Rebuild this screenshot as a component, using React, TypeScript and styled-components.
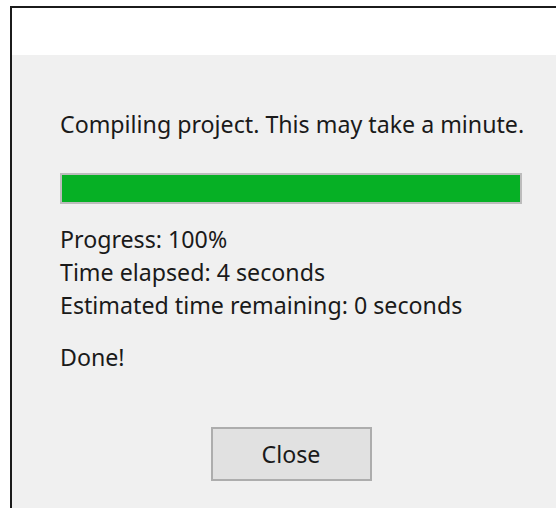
import React from 'react'
import styled, { createGlobalStyle } from 'styled-components'

const GlobalStyle = createGlobalStyle`
  html, body {
    margin: 0;
    padding: 0;
    background: #ffffff;
  }
  body {
    font-family: 'Noto Sans', 'Open Sans', sans-serif;
    overflow: hidden;
  }
`

const Window = styled.div`
  margin: 6px 0 0 10px;
  height: 502px;
  border-top: 2px solid #1b1b1b;
  border-left: 2px solid #1b1b1b;
  display: flex;
  flex-direction: column;
`

const TitleBar = styled.div`
  height: 47px;
  background: #ffffff;
`

const Body = styled.div`
  flex: 1;
  background: #f0f0f0;
  padding: 53px 0 0 48px;
  color: #1a1a1a;
  font-size: 23.2px;
`

const Message = styled.div`
  line-height: 33px;
  width: 480px;
  white-space: nowrap;
`

const Bar = styled.div`
  width: 462px;
  height: 31px;
  margin-top: 32px;
  box-sizing: border-box;
  border: 2px solid #bcbcbc;
  background: #e6e6e6;
`

type FillProps = { $pct: number }
const Fill = styled.div<FillProps>`
  height: 100%;
  width: ${({ $pct }) => $pct}%;
  background: #06b025;
`

const Stats = styled.div`
  margin-top: 19px;
  line-height: 33px;
`

const Status = styled.div`
  margin-top: 19px;
  line-height: 33px;
`

const Footer = styled.div`
  margin-top: 53px;
  width: 462px;
  display: flex;
  justify-content: center;
`

const Button = styled.button`
  width: 161px;
  height: 54px;
  box-sizing: border-box;
  border: 2px solid #adadad;
  background: #e1e1e1;
  font-family: inherit;
  font-size: 23.2px;
  color: #1a1a1a;
  padding: 0;
`

export default function App() {
  const progress = 100
  return (
    <>
      <GlobalStyle />
      <Window>
        <TitleBar />
        <Body>
          <Message>Compiling project. This may take a minute.</Message>
          <Bar>
            <Fill $pct={progress} />
          </Bar>
          <Stats>
            <div>Progress: {progress}%</div>
            <div>Time elapsed: 4 seconds</div>
            <div>Estimated time remaining: 0 seconds</div>
          </Stats>
          <Status>Done!</Status>
          <Footer>
            <Button>Close</Button>
          </Footer>
        </Body>
      </Window>
    </>
  )
}
